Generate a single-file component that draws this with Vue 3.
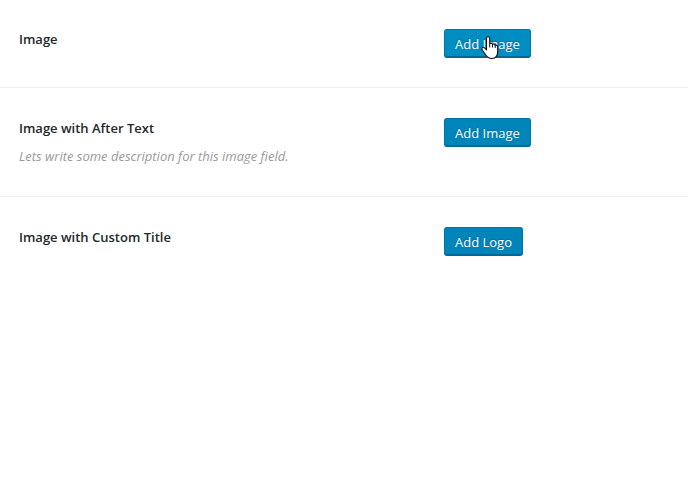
<script setup>
const fields = [
  { id: 'image', title: 'Image', button: 'Add Image', hovered: true },
  { id: 'image-after', title: 'Image with After Text', button: 'Add Image', description: 'Lets write some description for this image field.' },
  { id: 'image-logo', title: 'Image with Custom Title', button: 'Add Logo' },
]
</script>

<template>
  <main class="fields">
    <section v-for="field in fields" :key="field.id" class="field">
      <div class="label">
        <h4 :id="field.id" class="title">{{ field.title }}</h4>
        <p v-if="field.description" class="description">{{ field.description }}</p>
      </div>
      <div class="control">
        <button type="button" class="button" :class="{ hovered: field.hovered }" :aria-describedby="field.id">{{ field.button }}</button>
        <svg v-if="field.hovered" class="pointer" width="18" height="24" viewBox="0 0 18 24" aria-hidden="true">
          <path d="M5.500 14V2.500Q5.500 .7 7 .7T8.700 2.500V7.500Q10.500 6.500 11.500 8.200Q13.200 7.500 14.200 9.200Q16.700 8.700 16.700 11.500V15.500C16.700 19.500 15 22.500 11 22.500C7.500 22.500 6 21 4.500 18.500L1.300 14Q.3 12 1.700 11.300T5.500 14Z" fill="#fff" stroke="#111" stroke-width="1.1" stroke-linejoin="round" />
          <path d="M8.700 7.500V11.500M11.500 8.200V11.500M14.200 9.200V12" fill="none" stroke="#111" stroke-width="1" />
        </svg>
      </div>
    </section>
  </main>
</template>

<style>
body {
  margin: 0;
  background: #fff;
}
</style>

<style scoped>
.fields {
  font-family: "Open Sans", "Noto Sans", sans-serif;
  font-size: 13px;
  color: #23282d;
}
.field {
  display: grid;
  grid-template-columns: 425px 1fr;
  padding: 30px 19px;
  border-bottom: 1px solid #eee;
}
.field:first-child {
  padding-top: 29px;
  padding-bottom: 29px;
}
.field:last-child {
  border-bottom: 0;
}
.title {
  margin: 0;
  font-size: 13px;
  line-height: 20px;
  font-weight: 600;
}
.description {
  margin: 8px 0 0;
  font-size: 13px;
  line-height: 20px;
  font-style: italic;
  color: #999;
}
.control {
  position: relative;
}
.button {
  display: block;
  height: 29px;
  padding: 0 10px;
  border: 1px solid #0073aa;
  border-bottom-color: #006799;
  border-radius: 3px;
  background: #0085ba;
  box-shadow: inset 0 -1px 0 #006799;
  color: #fff;
  font-family: inherit;
  font-size: 13px;
  line-height: 26px;
  text-shadow: 0 -1px 1px #006799;
  cursor: pointer;
}
.button:hover,
.hovered {
  background: #008ec2;
}
.pointer {
  position: absolute;
  left: 37px;
  top: 7px;
}
</style>
